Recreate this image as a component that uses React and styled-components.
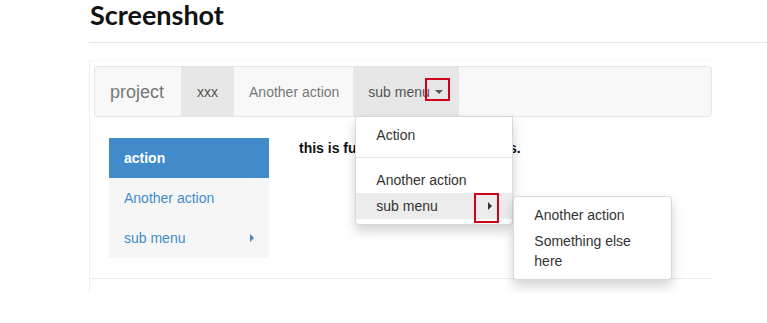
import React from 'react';
import styled, { createGlobalStyle } from 'styled-components';

const Global = createGlobalStyle`
  html, body { margin: 0; padding: 0; background: #fff; }
  body {
    font-family: "Liberation Sans", Arial, sans-serif;
    font-size: 14px;
    line-height: 20px;
    color: #333;
  }
  * { box-sizing: border-box; }
`;

const Page = styled.div`
  padding-left: 89px;
  width: 767px;
`;

const Title = styled.h1`
  margin: 0;
  padding: 0 0 12px 1px;
  font-family: Lato, "Open Sans", sans-serif;
  font-weight: 700;
  font-size: 27px;
  line-height: 30px;
  color: #111;
  border-bottom: 1px solid #e5e5e5;
`;

const Frame = styled.div`
  margin-top: 17px;
  width: 623px;
  border-left: 1px solid #f1f1f1;
  border-top: 1px solid #f8f8f8;
  padding-bottom: 14px;
`;

const NavWrap = styled.div`
  padding: 5px 0 0 4px;
`;

const Navbar = styled.div`
  display: flex;
  align-items: stretch;
  height: 51px;
  background: #f8f8f8;
  border: 1px solid #e7e7e7;
  border-radius: 4px;
`;

const Brand = styled.div`
  padding: 15px 17px 15px 15px;
  font-size: 18px;
  line-height: 20px;
  color: #777;
`;

const NavItem = styled.div`
  position: relative;
  display: flex;
  align-items: center;
  padding: 15px ${(p) => p.$padR || 15}px 15px ${(p) => p.$padL || 15}px;
  color: ${(p) => (p.$active ? '#555' : '#777')};
  background: ${(p) => (p.$active ? '#e7e7e7' : 'transparent')};
`;

const CaretDown = styled.span`
  display: inline-block;
  margin-left: 5px;
  width: 0;
  height: 0;
  border-top: 4px solid currentColor;
  border-left: 4px solid transparent;
  border-right: 4px solid transparent;
`;

const CaretRight = styled.span`
  display: inline-block;
  width: 0;
  height: 0;
  border-left: 4px solid ${(p) => p.$color || '#333'};
  border-top: 4px solid transparent;
  border-bottom: 4px solid transparent;
`;

const Mark = styled.span`
  position: absolute;
  left: ${(p) => p.$x}px;
  top: ${(p) => p.$y}px;
  width: ${(p) => p.$w}px;
  height: ${(p) => p.$h}px;
  border: 2px solid #d0021b;
  pointer-events: none;
`;

const Menu = styled.div`
  position: absolute;
  z-index: 10;
  top: ${(p) => p.$top};
  left: ${(p) => p.$left};
  width: ${(p) => p.$width}px;
  padding: 5px 0;
  background: #fff;
  border: 1px solid rgba(0, 0, 0, 0.15);
  border-radius: ${(p) => (p.$sub ? '4px' : '0 0 4px 4px')};
  box-shadow: 0 6px 12px rgba(0, 0, 0, 0.175);
  color: #333;
  font-size: 14px;
  line-height: 20px;
`;

const MenuItem = styled.div`
  position: relative;
  display: flex;
  align-items: center;
  justify-content: space-between;
  padding: 3px 20px;
  background: ${(p) => (p.$hover ? '#ececec' : 'transparent')};
`;

const Divider = styled.div`
  height: 1px;
  margin: 9px 0;
  background: #e5e5e5;
`;

const Section = styled.div`
  display: flex;
  align-items: flex-start;
  padding: 21px 0 20px 19px;
  border-bottom: 1px solid #eeeeee;
`;

const SideNav = styled.div`
  width: 160px;
  background: #f6f6f6;
`;

const SideItem = styled.div`
  display: flex;
  align-items: center;
  justify-content: space-between;
  padding: 10px 15px;
  line-height: 20px;
  color: ${(p) => (p.$active ? '#fff' : '#428bca')};
  background: ${(p) => (p.$active ? '#428bca' : 'transparent')};
  font-weight: ${(p) => (p.$active ? 700 : 400)};
`;

const Content = styled.div`
  padding-left: 30px;
  font-weight: 700;
  color: #111;
`;

export default function App() {
  return (
    <Page>
      <Global />
      <Title>Screenshot</Title>
      <Frame>
        <NavWrap>
          <Navbar>
            <Brand>project</Brand>
            <NavItem $active $padL={16} $padR={16}>xxx</NavItem>
            <NavItem $padR={14}>Another action</NavItem>
            <NavItem $active $padR={16}>
              sub menu
              <CaretDown />
              <Mark $x={72} $y={11} $w={25} $h={23} />
              <Menu $top="100%" $left="2px" $width={158}>
                <MenuItem>Action</MenuItem>
                <Divider />
                <MenuItem>Another action</MenuItem>
                <MenuItem $hover>
                  sub menu
                  <CaretRight />
                  <Mark $x={118} $y={0} $w={25} $h={30} />
                  <Menu $sub $top="3px" $left="calc(100% + 1px)" $width={159}>
                    <MenuItem>Another action</MenuItem>
                    <MenuItem>Something else here</MenuItem>
                  </Menu>
                </MenuItem>
              </Menu>
            </NavItem>
          </Navbar>
        </NavWrap>
        <Section>
          <SideNav>
            <SideItem $active>action</SideItem>
            <SideItem>Another action</SideItem>
            <SideItem>
              sub menu
              <CaretRight $color="#428bca" />
            </SideItem>
          </SideNav>
          <Content>this is full width contents of tabs.</Content>
        </Section>
      </Frame>
    </Page>
  );
}
